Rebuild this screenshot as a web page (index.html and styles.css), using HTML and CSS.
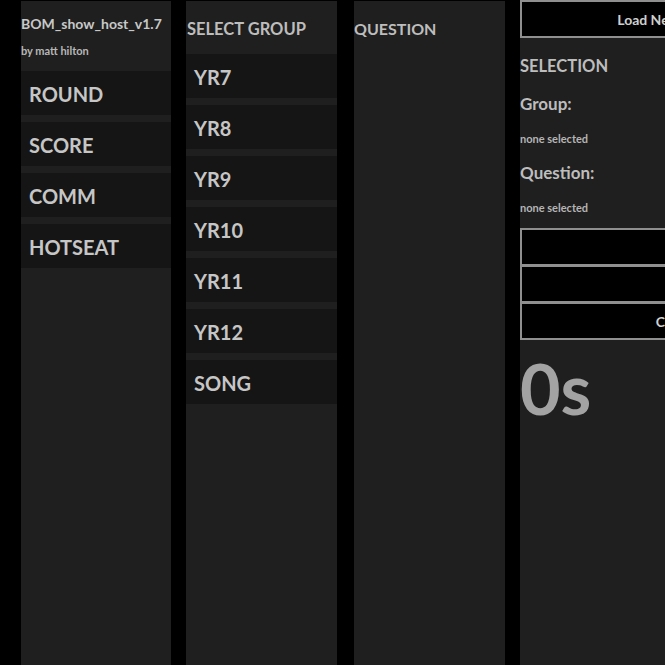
FILE: index.html
```html
<!DOCTYPE html>
<html>
<head>
<meta charset="utf-8">
<link rel="stylesheet" href="styles.css">
</head>
<body>
<div class="app">
  <div class="col col-menu">
    <div class="brand">
      <div class="title">BOM_show_host_v1.7</div>
      <div class="author">by matt hilton</div>
    </div>
    <div class="item">ROUND</div>
    <div class="item">SCORE</div>
    <div class="item">COMM</div>
    <div class="item">HOTSEAT</div>
  </div>
  <div class="col col-group">
    <div class="head">SELECT GROUP</div>
    <div class="item">YR7</div>
    <div class="item">YR8</div>
    <div class="item">YR9</div>
    <div class="item">YR10</div>
    <div class="item">YR11</div>
    <div class="item">YR12</div>
    <div class="item">SONG</div>
  </div>
  <div class="col col-question">
    <div class="head">QUESTION</div>
  </div>
  <div class="col col-control">
    <button class="btn btn-load">Load New Questions</button>
    <div class="sel-head">SELECTION</div>
    <div class="label">Group:</div>
    <div class="value">none selected</div>
    <div class="label">Question:</div>
    <div class="value">none selected</div>
    <div class="btn-stack">
      <button class="btn"></button>
      <button class="btn"></button>
      <button class="btn btn-clear">Clear</button>
    </div>
    <div class="timer">0s</div>
  </div>
</div>
</body>
</html>
```
FILE: styles.css
```css
html, body {
  margin: 0;
  padding: 0;
  background: #000;
  height: 100%;
  overflow: hidden;
}
body {
  font-family: "Lato", "Liberation Sans", sans-serif;
  color: #c4c4c4;
}
.app {
  display: flex;
  height: 665px;
  padding-left: 21px;
  padding-top: 1px;
  box-sizing: border-box;
}
.col {
  background: #1f1f1f;
  width: 151px;
  flex: none;
  height: 100%;
}
.col-menu { width: 150px; margin-right: 15px; }
.col-group { width: 151px; margin-right: 17px; }
.col-question { width: 151px; margin-right: 15px; }
.col-control { width: 310px; margin-top: -1px; height: 665px; }

.brand {
  height: 70px;
  box-sizing: border-box;
  padding-top: 14px;
}
.title {
  font-size: 14px;
  font-weight: 700;
  line-height: 18px;
  color: #c8c8c8;
}
.author {
  font-size: 11px;
  font-weight: 700;
  line-height: 14px;
  margin-top: 11px;
  color: #b8b8b8;
}
.item {
  background: #151515;
  height: 44px;
  line-height: 46px;
  padding-left: 8px;
  margin-bottom: 7px;
  font-size: 20px;
  font-weight: 700;
  color: #c6c6c6;
}
.head {
  height: 53px;
  box-sizing: border-box;
  padding-top: 18px;
  font-size: 16.5px;
  font-weight: 700;
  line-height: 20px;
  color: #bdbdbd;
}
.col-group .head { padding-left: 1px; }
.col-question .head { font-size: 16px; }

.btn {
  display: block;
  width: 100%;
  height: 38px;
  box-sizing: border-box;
  background: #000;
  border: 2px solid #8f8f8f;
  color: #cfcfcf;
  font-family: "Lato", "Liberation Sans", sans-serif;
  font-size: 14px;
  font-weight: 700;
  text-align: center;
  padding: 0;
}
.btn-load {
  padding-left: 14px;
}
.btn-clear {
  padding-right: 6px;
}
.sel-head {
  margin-top: 18px;
  font-size: 16.5px;
  font-weight: 700;
  line-height: 20px;
  color: #bdbdbd;
}
.label {
  margin-top: 18px;
  font-size: 17px;
  font-weight: 700;
  line-height: 20px;
  color: #bdbdbd;
}
.label + .value + .label {
  margin-top: 17px;
}
.value {
  margin-top: 18px;
  font-size: 11px;
  font-weight: 700;
  line-height: 14px;
  color: #b5b5b5;
}
.btn-stack {
  margin-top: 13px;
}
.btn-stack .btn + .btn {
  margin-top: -1px;
}
.timer {
  font-size: 70px;
  font-weight: 700;
  line-height: 80px;
  margin-top: 8px;
  color: #a3a3a3;
}
```
